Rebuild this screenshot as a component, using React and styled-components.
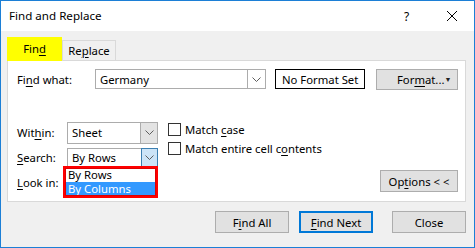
import styled, { createGlobalStyle } from 'styled-components'

const GlobalStyle = createGlobalStyle`
    html, body {
        margin: 0;
        padding: 0;
        background: #ffffff;
    }
    body {
        font-family: "Segoe UI", "Noto Sans", sans-serif;
        font-size: 11.3px;
        color: #000;
    }
`

const Window = styled.div`
    width: 475px;
    height: 248px;
    box-sizing: border-box;
    border: 1px solid #1c7fd6;
    background: #f0f0f0;
    display: flex;
    flex-direction: column;
    overflow: hidden;
`

const TitleBar = styled.div`
    height: 30px;
    background: #ffffff;
    display: flex;
    align-items: center;
    padding-left: 8px;
`

const Title = styled.div`
    flex: 1;
    font-size: 11.6px;
    padding-bottom: 2px;
`

const TitleButton = styled.div`
    width: 45px;
    height: 30px;
    display: flex;
    align-items: center;
    justify-content: center;
    font-size: 12px;
`

const Body = styled.div`
    padding: 6px 8px 0 6px;
    display: flex;
    flex-direction: column;
`

const Tabs = styled.div`
    display: flex;
    align-items: flex-end;
    height: 23px;
    position: relative;
    z-index: 1;
`

const Tab = styled.div`
    height: ${p => p.$active ? '24px' : '20px'};
    width: ${p => p.$w}px;
    box-sizing: border-box;
    background: ${p => p.$active ? '#ffff00' : '#f0f0f0'};
    border: 1px solid ${p => p.$active ? '#ffff00' : '#d9d9d9'};
    border-bottom: none;
    display: flex;
    align-items: center;
    justify-content: center;
    padding-bottom: ${p => p.$active ? '3px' : '0'};
    margin-bottom: ${p => p.$active ? '-1px' : '0'};
`

const Panel = styled.div`
    height: 142px;
    box-sizing: border-box;
    background: #ffffff;
    border: 1px solid #d9d9d9;
    padding: 8px 7px 0 9px;
    display: flex;
    flex-direction: column;
`

const TopRow = styled.div`
    display: flex;
    align-items: center;
    height: 20px;
`

const Label = styled.div`
    width: ${p => p.$w}px;
    flex-shrink: 0;
`

const U = styled.span`
    text-decoration: underline;
    text-underline-offset: 2px;
`

const Combo = styled.div`
    display: flex;
    width: ${p => p.$w}px;
    height: ${p => p.$h}px;
    box-sizing: border-box;
    border: 1px solid #acacac;
    background: #fff;
`

const ComboText = styled.div`
    flex: 1;
    display: flex;
    align-items: center;
    padding-left: 4px;
`

const ComboButton = styled.div`
    width: ${p => p.$w || 17}px;
    box-sizing: border-box;
    display: flex;
    align-items: center;
    justify-content: center;
    background: ${p => p.$state === 'hot' ? '#cce4f7' : p.$state === 'gray' ? '#e3e3e3' : '#ffffff'};
    border-left: 1px solid ${p => p.$state === 'hot' ? '#3c7fb1' : '#acacac'};
    ${p => p.$state === 'hot' && 'border: 1px solid #3c7fb1; margin: -1px -1px -1px 0;'}
`

const Chevron = () => (
    <svg width="9" height="5" viewBox="0 0 9 5">
        <path d="M0.5 0.5 L4.5 4.5 L8.5 0.5" fill="none" stroke="#5d5d5d" strokeWidth="1" />
    </svg>
)

const FormatBox = styled.div`
    margin-left: 9px;
    width: 90px;
    height: 20px;
    box-sizing: border-box;
    border: 1px solid #000;
    display: flex;
    align-items: center;
    justify-content: center;
`

const Button = styled.div`
    width: ${p => p.$w}px;
    height: ${p => p.$h || 22}px;
    box-sizing: border-box;
    background: #e1e1e1;
    border: ${p => p.$default ? '2px solid #0078d7' : '1px solid #adadad'};
    display: flex;
    align-items: center;
    justify-content: ${p => p.$split ? 'space-between' : 'center'};
    padding: ${p => p.$split ? '0 6px 0 20px' : '0'};
    margin-left: ${p => p.$ml || 0}px;
    flex-shrink: 0;
`

const Arrow = styled.span`
    font-size: 7px;
    color: #222;
`

const Lower = styled.div`
    margin-top: 33px;
    display: flex;
    position: relative;
`

const FieldGrid = styled.div`
    display: grid;
    grid-template-columns: 50px 91px;
    grid-auto-rows: 21px;
    row-gap: 4px;
    align-items: center;
`

const Checks = styled.div`
    margin-left: 10px;
    display: flex;
    flex-direction: column;
    gap: 6px;
    padding-top: 1px;
`

const CheckRow = styled.div`
    display: flex;
    align-items: center;
    gap: 4px;
    height: 13px;
`

const Box = styled.div`
    width: 13px;
    height: 13px;
    box-sizing: border-box;
    border: 1px solid #333;
    background: #fff;
`

const OptionsWrap = styled.div`
    margin-left: auto;
    align-self: flex-end;
    padding-bottom: 1px;
`

const DropList = styled.div`
    position: absolute;
    left: 46px;
    top: 44px;
    width: 95px;
    box-sizing: border-box;
    border: 2px solid #ff0000;
    outline: 1px solid #e00000;
    outline-offset: -3px;
    background: #fff;
`

const DropItem = styled.div`
    height: 14px;
    line-height: 14px;
    padding-left: 3px;
    background: ${p => p.$sel ? '#3399ff' : '#fff'};
    color: ${p => p.$sel ? '#fff' : '#000'};
`

const Footer = styled.div`
    display: flex;
    justify-content: flex-end;
    padding-top: 9px;
`

export default function App() {
    return (
        <>
            <GlobalStyle />
            <Window>
                <TitleBar>
                    <Title>Find and Replace</Title>
                    <TitleButton>?</TitleButton>
                    <TitleButton>
                        <svg width="10" height="10" viewBox="0 0 10 10">
                            <path d="M0 0 L10 10 M10 0 L0 10" stroke="#000" strokeWidth="1" />
                        </svg>
                    </TitleButton>
                </TitleBar>
                <Body>
                    <Tabs>
                        <Tab $active $w={55}><span>Fin<U>d</U></span></Tab>
                        <Tab $w={54}><span>Re<U>p</U>lace</span></Tab>
                    </Tabs>
                    <Panel>
                        <TopRow>
                            <Label $w={78}>Fi<U>n</U>d what:</Label>
                            <Combo $w={172} $h={20}>
                                <ComboText>Germany</ComboText>
                                <ComboButton $w={18}><Chevron /></ComboButton>
                            </Combo>
                            <FormatBox>No Format Set</FormatBox>
                            <Button $w={82} $h={21} $ml={11} $split>
                                <span>For<U>m</U>at...</span>
                                <Arrow>▼</Arrow>
                            </Button>
                        </TopRow>
                        <Lower>
                            <FieldGrid>
                                <Label>Wit<U>h</U>in:</Label>
                                <Combo $w={91} $h={22}>
                                    <ComboText>Sheet</ComboText>
                                    <ComboButton $state="gray"><Chevron /></ComboButton>
                                </Combo>
                                <Label><U>S</U>earch:</Label>
                                <Combo $w={91} $h={20}>
                                    <ComboText>By Rows</ComboText>
                                    <ComboButton $state="hot"><Chevron /></ComboButton>
                                </Combo>
                                <Label><U>L</U>ook in:</Label>
                                <div />
                            </FieldGrid>
                            <Checks>
                                <CheckRow><Box /><span>Match <U>c</U>ase</span></CheckRow>
                                <CheckRow><Box /><span>Match entire cell c<U>o</U>ntents</span></CheckRow>
                            </Checks>
                            <OptionsWrap>
                                <Button $w={78}><span>Op<U>t</U>ions &lt; &lt;</span></Button>
                            </OptionsWrap>
                            <DropList>
                                <DropItem>By Rows</DropItem>
                                <DropItem $sel>By Columns</DropItem>
                            </DropList>
                        </Lower>
                    </Panel>
                    <Footer>
                        <Button $w={74}><span>F<U>i</U>nd All</span></Button>
                        <Button $w={74} $ml={10} $default><span><U>F</U>ind Next</span></Button>
                        <Button $w={74} $ml={19}>Close</Button>
                    </Footer>
                </Body>
            </Window>
        </>
    )
}
